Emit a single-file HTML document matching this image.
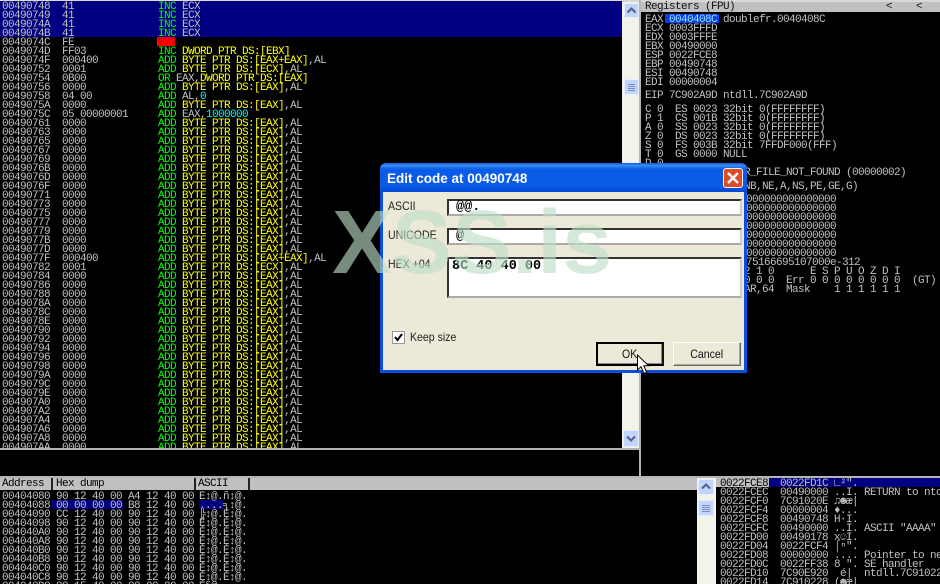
<!DOCTYPE html>
<html><head><meta charset="utf-8"><style>
html,body{margin:0;padding:0;background:#000;width:940px;height:584px;overflow:hidden}
#p{position:relative;width:940px;height:584px;overflow:hidden;background:#000}
.a{position:absolute}
pre{position:absolute;margin:0;padding-top:2px;font:11px/9px "Liberation Mono","DejaVu Sans Mono",monospace;letter-spacing:-.6px;color:#c0c0c0;white-space:pre}
.g{color:#0f0}.y{color:#ff0}.c{color:#0ff}
.btn{position:absolute;background:#c3d4fb;border:1px solid #e6eefd;box-sizing:border-box}
.track{position:absolute;background:#f3f3ec}
.hdr{position:absolute;background:#c0c0c0;color:#000;height:12px;top:478px;border-right:2px solid #222;box-sizing:border-box}
.hdr pre{color:#000;top:0;left:2px}
.lbl{position:absolute;font:12px/14px "Liberation Sans",sans-serif;color:#222;transform:scaleX(.88);transform-origin:left center;white-space:pre}
.inp{position:absolute;left:447px;width:295px;background:#fff;border:2px solid;border-color:#333 #ccc #aaa #333;box-sizing:border-box}
.v{position:absolute;font:bold 13.5px/14px "Liberation Mono",monospace;color:#000;white-space:pre}
.b{position:absolute;background:#ece9d8;box-sizing:border-box;font:12px/21px "Liberation Sans",sans-serif;text-align:center;color:#111}
.b span{display:inline-block;transform:scaleX(.88)}
</style></head><body><div id="p">

<div class="a" style="left:0;top:0;width:940px;height:2px;background:#d8d8d8"></div>
<div class="a" style="left:0;top:1px;width:622px;height:36px;background:#000080"></div>
<div class="a" style="left:153px;top:1px;width:1px;height:36px;background:#00004a"></div>
<div class="a" style="left:157px;top:37px;width:18px;height:9px;background:#f00"></div>

<div class="a" style="left:0;top:1px;width:622px;height:447px;overflow:hidden">
<pre style="left:2px;top:0">00490748
00490749
0049074A
0049074B
0049074C
0049074D
0049074F
00490752
00490754
00490756
00490758
0049075A
0049075C
00490761
00490763
00490765
00490767
00490769
0049076B
0049076D
0049076F
00490771
00490773
00490775
00490777
00490779
0049077B
0049077D
0049077F
00490782
00490784
00490786
00490788
0049078A
0049078C
0049078E
00490790
00490792
00490794
00490796
00490798
0049079A
0049079C
0049079E
004907A0
004907A2
004907A4
004907A6
004907A8
004907AA</pre>
<pre style="left:62px;top:0">41
41
41
41
FE
FF03
000400
0001
0B00
0000
04 00
0000
05 00000001
0000
0000
0000
0000
0000
0000
0000
0000
0000
0000
0000
0000
0000
0000
0000
000400
0001
0000
0000
0000
0000
0000
0000
0000
0000
0000
0000
0000
0000
0000
0000
0000
0000
0000
0000
0000
0000</pre>
<pre style="left:158px;top:0"><span class="g">INC</span> ECX
<span class="g">INC</span> ECX
<span class="g">INC</span> ECX
<span class="g">INC</span> ECX
<span style="color:#b00000">???</span>
<span class="g">INC</span> <span class="y">DWORD PTR DS:[EBX]</span>
<span class="g">ADD</span> <span class="y">BYTE PTR DS:[EAX+EAX]</span>,AL
<span class="g">ADD</span> <span class="y">BYTE PTR DS:[ECX]</span>,AL
<span class="g">OR</span> EAX,<span class="y">DWORD PTR DS:[EAX]</span>
<span class="g">ADD</span> <span class="y">BYTE PTR DS:[EAX]</span>,AL
<span class="g">ADD</span> AL,<span class="c">0</span>
<span class="g">ADD</span> <span class="y">BYTE PTR DS:[EAX]</span>,AL
<span class="g">ADD</span> EAX,<span class="c">1000000</span>
<span class="g">ADD</span> <span class="y">BYTE PTR DS:[EAX]</span>,AL
<span class="g">ADD</span> <span class="y">BYTE PTR DS:[EAX]</span>,AL
<span class="g">ADD</span> <span class="y">BYTE PTR DS:[EAX]</span>,AL
<span class="g">ADD</span> <span class="y">BYTE PTR DS:[EAX]</span>,AL
<span class="g">ADD</span> <span class="y">BYTE PTR DS:[EAX]</span>,AL
<span class="g">ADD</span> <span class="y">BYTE PTR DS:[EAX]</span>,AL
<span class="g">ADD</span> <span class="y">BYTE PTR DS:[EAX]</span>,AL
<span class="g">ADD</span> <span class="y">BYTE PTR DS:[EAX]</span>,AL
<span class="g">ADD</span> <span class="y">BYTE PTR DS:[EAX]</span>,AL
<span class="g">ADD</span> <span class="y">BYTE PTR DS:[EAX]</span>,AL
<span class="g">ADD</span> <span class="y">BYTE PTR DS:[EAX]</span>,AL
<span class="g">ADD</span> <span class="y">BYTE PTR DS:[EAX]</span>,AL
<span class="g">ADD</span> <span class="y">BYTE PTR DS:[EAX]</span>,AL
<span class="g">ADD</span> <span class="y">BYTE PTR DS:[EAX]</span>,AL
<span class="g">ADD</span> <span class="y">BYTE PTR DS:[EAX]</span>,AL
<span class="g">ADD</span> <span class="y">BYTE PTR DS:[EAX+EAX]</span>,AL
<span class="g">ADD</span> <span class="y">BYTE PTR DS:[ECX]</span>,AL
<span class="g">ADD</span> <span class="y">BYTE PTR DS:[EAX]</span>,AL
<span class="g">ADD</span> <span class="y">BYTE PTR DS:[EAX]</span>,AL
<span class="g">ADD</span> <span class="y">BYTE PTR DS:[EAX]</span>,AL
<span class="g">ADD</span> <span class="y">BYTE PTR DS:[EAX]</span>,AL
<span class="g">ADD</span> <span class="y">BYTE PTR DS:[EAX]</span>,AL
<span class="g">ADD</span> <span class="y">BYTE PTR DS:[EAX]</span>,AL
<span class="g">ADD</span> <span class="y">BYTE PTR DS:[EAX]</span>,AL
<span class="g">ADD</span> <span class="y">BYTE PTR DS:[EAX]</span>,AL
<span class="g">ADD</span> <span class="y">BYTE PTR DS:[EAX]</span>,AL
<span class="g">ADD</span> <span class="y">BYTE PTR DS:[EAX]</span>,AL
<span class="g">ADD</span> <span class="y">BYTE PTR DS:[EAX]</span>,AL
<span class="g">ADD</span> <span class="y">BYTE PTR DS:[EAX]</span>,AL
<span class="g">ADD</span> <span class="y">BYTE PTR DS:[EAX]</span>,AL
<span class="g">ADD</span> <span class="y">BYTE PTR DS:[EAX]</span>,AL
<span class="g">ADD</span> <span class="y">BYTE PTR DS:[EAX]</span>,AL
<span class="g">ADD</span> <span class="y">BYTE PTR DS:[EAX]</span>,AL
<span class="g">ADD</span> <span class="y">BYTE PTR DS:[EAX]</span>,AL
<span class="g">ADD</span> <span class="y">BYTE PTR DS:[EAX]</span>,AL
<span class="g">ADD</span> <span class="y">BYTE PTR DS:[EAX]</span>,AL
<span class="g">ADD</span> <span class="y">BYTE PTR DS:[EAX]</span>,AL</pre>
</div>

<div class="a" style="left:0;top:448px;width:641px;height:2px;background:#b4b4b4"></div>
<div class="a" style="left:639px;top:0;width:2px;height:478px;background:#b4b4b4"></div>
<div class="a" style="left:0;top:476px;width:940px;height:2px;background:#b4b4b4"></div>

<div class="track" style="left:622px;top:2px;width:17px;height:446px"></div>
<div class="btn" style="left:624px;top:3px;width:15px;height:15px"><svg width="13" height="13" style="display:block"><path d="M2.5 8.5 L6.5 4.5 L10.5 8.5" fill="none" stroke="#4d6185" stroke-width="2"/></svg></div>
<div class="btn" style="left:624px;top:79px;width:15px;height:16px"><svg width="13" height="14" style="display:block"><path d="M3 4.5H10M3 6.5H10M3 8.5H10M3 10.5H10" stroke="#7a8fc0" stroke-width="1"/></svg></div>
<div class="btn" style="left:623px;top:430px;width:16px;height:17px"><svg width="14" height="15" style="display:block"><path d="M3 5.5 L7 9.5 L11 5.5" fill="none" stroke="#4d6185" stroke-width="2"/></svg></div>

<div class="a" style="left:641px;top:2px;width:299px;height:10px;background:#c0c0c0"></div>
<pre style="left:645px;top:1px;color:#111">Registers (FPU)</pre>
<pre style="left:886px;top:1px;color:#111">&lt;</pre>
<pre style="left:916px;top:1px;color:#111">&lt;</pre>

<div class="a" style="left:665px;top:14px;width:54px;height:9px;background:#0a3ce8"></div>
<pre style="left:645px;top:14px">EAX <span style="color:#8fe0ff">0040408C</span> doublefr.0040408C
ECX 0003FFFD
EDX 0003FFFE
EBX 00490000
ESP 0022FCE8
EBP 00490748
ESI 00490748
EDI 00000004</pre>
<pre style="left:645px;top:90px">EIP 7C902A9D ntdll.7C902A9D</pre>
<pre style="left:645px;top:104px">C 0  ES 0023 32bit 0(FFFFFFFF)
P 1  CS 001B 32bit 0(FFFFFFFF)
A 0  SS 0023 32bit 0(FFFFFFFF)
Z 0  DS 0023 32bit 0(FFFFFFFF)
S 0  FS 003B 32bit 7FFDF000(FFF)
T 0  GS 0000 NULL
D 0</pre>
<pre style="left:672px;top:167px">LastErr ERROR_FILE_NOT_FOUND (00000002)</pre>
<pre style="left:642px;top:181px">EFL 00000246 (NO,NB,NE,A,NS,PE,GE,G)</pre>
<pre style="left:746px;top:194px">000000000000000
000000000000000
000000000000000
000000000000000
000000000000000
000000000000000
000000000000000
75166695107000e-312</pre>
<pre style="left:744px;top:266px">2 1 0      E S P U O Z D I
0 0 0  Err 0 0 0 0 0 0 0 0  (GT)
AR,64  Mask    1 1 1 1 1 1</pre>

<div class="hdr" style="left:0;width:53px"><pre>Address</pre></div>
<div class="hdr" style="left:53px;width:143px"><pre style="left:3px">Hex dump</pre></div>
<div class="hdr" style="left:196px;width:54px"><pre>ASCII</pre></div>
<div class="a" style="left:250px;top:478px;width:447px;height:12px;background:#c0c0c0"></div>

<div class="a" style="left:52px;top:500px;width:71px;height:9px;background:#000080"></div>
<div class="a" style="left:199px;top:500px;width:24px;height:9px;background:#000080"></div>
<div class="a" style="left:0;top:491px;width:697px;height:93px;overflow:hidden">
<pre style="left:2px;top:0">00404080
00404088
00404090
00404098
004040A0
004040A8
004040B0
004040B8
004040C0
004040C8
004040D0</pre>
<pre style="left:56px;top:0">90 12 40 00 A4 12 40 00
00 00 00 00 B8 12 40 00
CC 12 40 00 90 12 40 00
90 12 40 00 90 12 40 00
90 12 40 00 90 12 40 00
90 12 40 00 90 12 40 00
90 12 40 00 90 12 40 00
90 12 40 00 90 12 40 00
90 12 40 00 90 12 40 00
90 12 40 00 90 12 40 00
90 15 40 00 00 00 00 00</pre>
<pre style="left:199px;top:0">É↕@.ñ↕@.
....╕↕@.
╠↕@.É↕@.
É↕@.É↕@.
É↕@.É↕@.
É↕@.É↕@.
É↕@.É↕@.
É↕@.É↕@.
É↕@.É↕@.
É↕@.É↕@.
É§@.....</pre>
</div>

<div class="track" style="left:697px;top:478px;width:19px;height:106px"></div>
<div class="btn" style="left:698px;top:479px;width:16px;height:16px"><svg width="14" height="14" style="display:block"><path d="M3 8.5 L7 4.5 L11 8.5" fill="none" stroke="#4d6185" stroke-width="2"/></svg></div>
<div class="btn" style="left:698px;top:500px;width:16px;height:16px"><svg width="14" height="14" style="display:block"><path d="M3 4.5H11M3 6.5H11M3 8.5H11M3 10.5H11" stroke="#7a8fc0" stroke-width="1"/></svg></div>

<div class="a" style="left:716px;top:478px;width:53px;height:9px;background:#c0c0c0"></div>
<div class="a" style="left:769px;top:478px;width:171px;height:9px;background:#000080"></div>
<pre style="left:720px;top:478px"><span style="color:#000">0022FCE8</span>
0022FCEC
0022FCF0
0022FCF4
0022FCF8
0022FCFC
0022FD00
0022FD04
0022FD08
0022FD0C
0022FD10
0022FD14</pre>
<pre style="left:780px;top:478px">0022FD1C
00490000
7C91020E
00000004
00490748
00490000
00490178
0022FCF4
00000000
0022FF38
7C90E920
7C910228</pre>
<pre style="left:834px;top:478px">∟²".
..I.
♫☻æ|
♦...
H·I.
..I.
x☺I.
⌠ⁿ".
....
8 ".
 é|
(☻æ|</pre>
<pre style="left:864px;top:478px">

RETURN to ntc



ASCII "AAAA"


Pointer to ne
SE handler
ntdll.7C91022</pre>

<!-- dialog -->
<div class="a" style="left:380px;top:163px;width:367px;height:210px;background:#0a4fdc;border-radius:6px 6px 0 0"></div>
<div class="a" style="left:380px;top:163px;width:367px;height:29px;border-radius:6px 6px 0 0;background:linear-gradient(#0a57e0 0,#3a8cf5 8%,#0a5ce8 22%,#0a5ae6 80%,#0347d0 100%)"></div>
<div class="a" style="left:383px;top:192px;width:361px;height:178px;background:#ece9d8"></div>
<div class="a" style="left:387px;top:171px;font:bold 13.5px/16px 'Liberation Sans',sans-serif;color:#fff;white-space:pre">Edit code at 00490748</div>
<div class="a" style="left:723px;top:168px;width:20px;height:20px;box-sizing:border-box;border:1px solid #f4f4f4;border-radius:3px;background:#dc4c28"><svg width="18" height="18" style="display:block"><path d="M4 4 L14 14 M14 4 L4 14" stroke="#fff" stroke-width="2.4"/></svg></div>

<div class="lbl" style="left:388px;top:199px">ASCII</div>
<div class="lbl" style="left:388px;top:228px">UNICODE</div>
<div class="lbl" style="left:388px;top:257px">HEX +04</div>
<div class="inp" style="top:199px;height:17px"></div>
<div class="inp" style="top:228px;height:17px"></div>
<div class="inp" style="top:257px;height:41px"></div>
<div class="v" style="left:456px;top:201px">@@.</div>
<div class="v" style="left:456px;top:230px">@</div>
<div class="v" style="left:452px;top:260px">8C 40 40 00</div>

<div class="a" style="left:392px;top:331px;width:13px;height:13px;box-sizing:border-box;border:1px solid #999;background:#fff"><svg width="11" height="11" style="display:block"><path d="M2 5 L4.5 8 L9 2" fill="none" stroke="#000" stroke-width="2"/></svg></div>
<div class="lbl" style="left:410px;top:330px">Keep size</div>

<div class="b" style="left:596px;top:342px;width:68px;height:24px;border:2px solid #000;border-right-color:#111;box-shadow:inset -1px -1px 0 #888"><span>OK</span></div>
<div class="b" style="left:673px;top:342px;width:68px;height:24px;border:1px solid;border-color:#fff #666 #666 #fff;box-shadow:inset -1px -1px 0 #aca899;line-height:22px"><span>Cancel</span></div>

<svg class="a" style="left:636px;top:354px" width="16" height="21"><path d="M1.5 1 V16 L5 12.7 L8 19.5 L10.7 18.3 L7.8 11.7 H12.5 Z" fill="#fff" stroke="#000" stroke-width="1"/></svg>

<!-- watermark -->
<div class="a" style="left:332px;top:198px;font:bold 90px/90px 'Liberation Sans',sans-serif;color:rgba(190,222,198,.63);white-space:pre">XSS.is</div>

</div></body></html>
